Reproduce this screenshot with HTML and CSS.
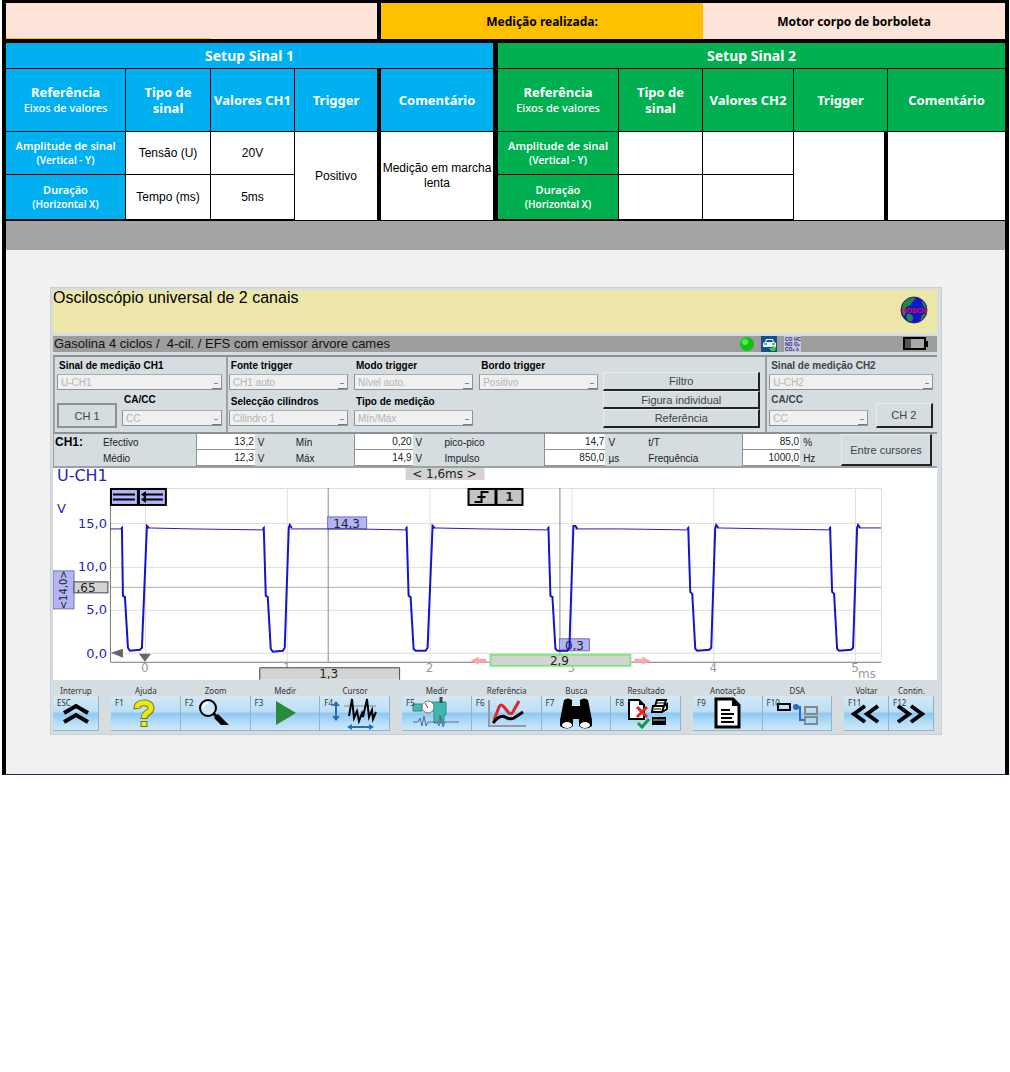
FILE: index.html
```html
<!DOCTYPE html>
<html lang="pt">
<head>
  <meta charset="utf-8">
  <title>Medição - Motor corpo de borboleta</title>
  <link rel="stylesheet" href="styles.css">
</head>
<body>
  <main class="sheet">

    <!-- Setup table -->
    <table class="setup">
      <colgroup>
        <col class="c-ref1"><col class="c-type1"><col class="c-val1"><col class="c-trig1"><col class="c-com1">
        <col class="c-ref2"><col class="c-type2"><col class="c-val2"><col class="c-trig2"><col class="c-com2">
      </colgroup>
      <tbody>
        <tr class="row-title">
          <td class="peach lined thick-right" colspan="4"></td>
          <th class="orange" colspan="3">Medição realizada:</th>
          <th class="peach" colspan="3">Motor corpo de borboleta</th>
        </tr>
        <tr class="row-setup">
          <th class="blue heavy-right" colspan="5">Setup Sinal 1</th>
          <th class="green last" colspan="5">Setup Sinal 2</th>
        </tr>
        <tr class="row-head">
          <th class="blue">Referência<small>Eixos de valores</small></th>
          <th class="blue">Tipo de<br>sinal</th>
          <th class="blue">Valores CH1</th>
          <th class="blue thick-right">Trigger</th>
          <th class="blue heavy-right">Comentário</th>
          <th class="green">Referência<small>Eixos de valores</small></th>
          <th class="green">Tipo de<br>sinal</th>
          <th class="green">Valores CH2</th>
          <th class="green">Trigger</th>
          <th class="green last">Comentário</th>
        </tr>
        <tr class="row-amp">
          <th class="blue">Amplitude de sinal<small>(Vertical - Y)</small></th>
          <td>Tensão (U)</td>
          <td>20V</td>
          <td class="thick-right" rowspan="2">Positivo</td>
          <td class="heavy-right" rowspan="2">Medição em marcha lenta</td>
          <th class="green">Amplitude de sinal<small>(Vertical - Y)</small></th>
          <td></td>
          <td></td>
          <td class="thick-right" rowspan="2"></td>
          <td class="last" rowspan="2"></td>
        </tr>
        <tr class="row-dur">
          <th class="blue">Duração<small>(Horizontal X)</small></th>
          <td>Tempo (ms)</td>
          <td>5ms</td>
          <th class="green">Duração<small>(Horizontal X)</small></th>
          <td></td>
          <td></td>
        </tr>
      </tbody>
    </table>

    <div class="divider"></div>

    <div class="stage">
      <section class="scope">

        <header class="scope-title">
          <h1>Osciloscópio universal de 2 canais</h1>
          <svg class="globe" viewBox="0 0 28 28">
            <circle cx="14" cy="14" r="13" fill="#1414c8"/>
            <path d="M2 10C4 4 9 1 14 1C17 3 12 5 11 8C9 11 6 10 5 13C7 17 5 19 4 20C1 17 1 13 2 10Z" fill="#1d8a4a"/>
            <path d="M7 18C10 17 14 20 13 23C12 26 10 26 8 25C6 23 6 20 7 18ZM22 4C25 6 27 10 27 13C24 12 22 8 22 4ZM22 19L26 17C25 21 23 23 20 25Z" fill="#1d8a4a"/>
            <circle cx="14" cy="14" r="13" fill="none" stroke="#2a2a66"/>
            <text x="14" y="17" text-anchor="middle">BOSCH</text>
          </svg>
        </header>

        <div class="vehicle">
          <span>Gasolina 4 ciclos /&nbsp; 4-cil. / EFS com emissor árvore cames</span>
          <svg class="status" viewBox="0 0 188 16">
            <circle cx="7" cy="8" r="7" fill="#12c412"/>
            <circle cx="5" cy="6" r="3" fill="#4ff04f"/>
            <rect x="21" y="0" width="16" height="16" fill="#12508c"/>
            <path d="M23 11V7L25 6L26 3H33L34 6L36 7V11Z" fill="#e8f2fa"/>
            <path d="M26 6L27 4H32L33 6Z" fill="#12508c"/>
            <path d="M24 8H27M32 8H35M24 13H35" stroke="#12508c"/>
            <path d="M36 11L32 10V12H29L31 15H35Z" fill="#42d02a"/>
            <rect x="44" y="0" width="17" height="16" fill="#c6c6d2"/>
            <text x="45" y="5">CO HC</text>
            <text x="45" y="10">NO O₂</text>
            <text x="45" y="15">CO₂ λ</text>
            <rect x="164" y="2" width="21" height="11" fill="#a8a8a8" stroke="#000" stroke-width="2"/>
            <rect x="186" y="5" width="2" height="6"/>
            <path d="M166 3V12M168 3V12M170 3V12" stroke="#000"/>
          </svg>
        </div>

        <form class="controls">
          <div class="group ch1">
            <label for="sig1" class="wide">Sinal de medição CH1</label>
            <select id="sig1" class="wide" disabled><option>U-CH1</option></select>
            <button type="button" class="ch pressed">CH 1</button>
            <label for="cc1">CA/CC</label>
            <select id="cc1" disabled><option>CC</option></select>
          </div>
          <div class="group trigger">
            <div class="field">
              <label for="src">Fonte trigger</label>
              <select id="src" disabled><option>CH1 auto</option></select>
            </div>
            <div class="field">
              <label for="mode">Modo trigger</label>
              <select id="mode" disabled><option>Nível auto.</option></select>
            </div>
            <div class="field">
              <label for="edge">Bordo trigger</label>
              <select id="edge" disabled><option>Positivo</option></select>
            </div>
            <div class="field">
              <label for="cyl">Selecção cilindros</label>
              <select id="cyl" disabled><option>Cilindro 1</option></select>
            </div>
            <div class="field">
              <label for="kind">Tipo de medição</label>
              <select id="kind" disabled><option>Mín/Máx</option></select>
            </div>
          </div>
          <div class="stack">
            <button type="button">Filtro</button>
            <button type="button">Figura individual</button>
            <button type="button">Referência</button>
          </div>
          <div class="group ch2">
            <label for="sig2" class="wide">Sinal de medição CH2</label>
            <select id="sig2" class="wide" disabled><option>U-CH2</option></select>
            <label for="cc2">CA/CC</label>
            <select id="cc2" disabled><option>CC</option></select>
            <button type="button" class="ch">CH 2</button>
          </div>
        </form>

        <form class="readout">
          <strong>CH1:</strong>
          <label for="ef">Efectivo</label><input id="ef" value="13,2" readonly><span>V</span>
          <label for="min">Mín</label><input id="min" value="0,20" readonly><span>V</span>
          <label for="pp">pico-pico</label><input id="pp" value="14,7" readonly><span>V</span>
          <label for="tt">t/T</label><input id="tt" value="85,0" readonly><span>%</span>
          <button type="button">Entre cursores</button>
          <label for="med" class="second">Médio</label><input id="med" value="12,3" readonly><span>V</span>
          <label for="max">Máx</label><input id="max" value="14,9" readonly><span>V</span>
          <label for="imp">Impulso</label><input id="imp" value="850,0" readonly><span>µs</span>
          <label for="freq">Frequência</label><input id="freq" value="1000,0" readonly><span>Hz</span>
        </form>

        <svg class="chart" viewBox="0 0 885 212">
          <!-- grid -->
          <path class="grid" d="M57 20.5H829M57 55.5H829M57 99.5H829M57 142.5H829M57 185.5H829M92.5 20V194M234.5 20V194M377.5 20V194M519.5 20V194M661.5 20V194M803.5 20V194M829.5 20V194"/>
          <path class="level" d="M57 119.5H829"/>
          <path class="axis" d="M57.5 20V194.5H829"/>
          <path class="cursor" d="M275.5 20V194M507.5 20V194"/>

          <!-- cursor values -->
          <rect class="tag" x="275" y="49" width="39" height="12"/>
          <text class="tag-text" x="294" y="60">14,3</text>
          <rect class="tag" x="507" y="171" width="30" height="12"/>
          <text class="tag-text" x="522" y="182">0,3</text>

          <!-- signal -->
          <path class="flat" d="M57 61H69M95 60L140 61L211 62M238 61L300 61L354 62M381 60L430 61L496 62M523 61L570 61L636 62M665 60L720 61L778 62M807 60H829"/>
          <path class="trace" d="M68 61L69 60L70 128L72 129L75 180L77 183L87 182L89 180L94 58L96 60"/>
          <path class="trace" d="M210 61L211 60L213 128L215 129L218 181L220 184L230 183L232 180L236 60L237 57L239 60"/>
          <path class="trace" d="M353 61L354 60L356 128L358 129L361 181L363 183L373 183L375 180L380 58L382 60"/>
          <path class="trace" d="M495 61L496 60L498 128L500 129L503 181L505 183L515 183L517 180L521 58L523 58L525 61"/>
          <path class="trace" d="M635 61L636 60L638 124L640 126L643 181L645 183L657 182L659 180L663 60L664 57L666 60"/>
          <path class="trace" d="M777 61L778 60L780 124L782 126L785 181L787 183L799 182L801 180L805 60L806 57L808 60"/>

          <!-- channel and axis names -->
          <text class="name" x="4" y="13">U-CH1</text>
          <text class="volt" x="4" y="45">V</text>
          <text class="volt end" x="54" y="60">15,0</text>
          <text class="volt end" x="54" y="103">10,0</text>
          <text class="volt end" x="54" y="146">5,0</text>
          <text class="volt end" x="54" y="190">0,0</text>
          <text class="time" x="92" y="204">0</text>
          <text class="time" x="234" y="204">1</text>
          <text class="time" x="377" y="204">2</text>
          <text class="time" x="519" y="204">3</text>
          <text class="time" x="661" y="204">4</text>
          <text class="time" x="803" y="204">5</text>
          <text class="time" x="815" y="210">ms</text>

          <!-- line mode buttons -->
          <rect class="mode" x="58" y="21" width="27" height="16"/>
          <rect class="mode" x="86" y="21" width="27" height="16"/>
          <path d="M60 26.5H82M60 31.5H82M92 26.5H110M92 31.5H110" stroke="#000" stroke-width="2"/>
          <path d="M88 26.5L93 23V30ZM88 31.5L93 28V35Z"/>

          <!-- trigger edge -->
          <rect class="edge" x="416" y="21" width="27" height="16"/>
          <rect class="edge" x="444" y="21" width="26" height="16"/>
          <path d="M422 34H429V24H436M425 29H433" fill="none" stroke="#000" stroke-width="2"/>
          <text class="value bold" x="457" y="33">1</text>

          <rect class="grey-box plain" x="353" y="0" width="79" height="12"/>
          <text class="value" x="392" y="10">&lt; 1,6ms &gt;</text>

          <!-- vertical scale -->
          <rect class="tag" x="0" y="103" width="21" height="38"/>
          <text class="value small" transform="translate(14 122) rotate(-90)">&lt;14,0&gt;</text>
          <rect class="grey-box" x="21" y="114" width="34" height="11"/>
          <text class="value" x="33" y="124">,65</text>
          <path class="mark" d="M58 185L70 181V190ZM86 186H98L92 194Z"/>

          <!-- time cursors -->
          <rect class="window" x="438" y="187" width="140" height="11"/>
          <text class="value" x="507" y="197">2,9</text>
          <path class="pull" d="M418 193L426 189V191H434V195H426V197ZM598 193L590 189V191H582V195H590V197Z"/>
          <path class="grey-box" d="M207 212V200H347V212"/>
          <text class="value" x="276" y="210">1,3</text>
        </svg>

        <nav class="keys">
          <div class="bank">
            <button type="button"><span>Interrup</span>
              <span class="face"><i>ESC</i>
                <svg viewBox="0 0 50 34"><path d="M13 17L25 10L37 17M13 26L25 19L37 26" fill="none" stroke="#000" stroke-width="4"/></svg>
              </span></button>
          </div>
          <div class="bank">
            <button type="button"><span>Ajuda</span>
              <span class="face"><i>F1</i>
                <svg viewBox="0 0 50 34"><path d="M17 13C16 5 31 5 31 12C31 17 24 16 24 23M24 25V31" fill="none" stroke="#77771a" stroke-width="7"/><path d="M17 12C17 5 31 5 31 12C31 17 24 16 24 22M24 26V30" fill="none" stroke="#e8ea10" stroke-width="5"/></svg>
              </span></button>
            <button type="button"><span>Zoom</span>
              <span class="face"><i>F2</i>
                <svg viewBox="0 0 50 34"><circle cx="18" cy="12" r="8" fill="#cfe6f6" stroke="#000" stroke-width="2"/><path d="M13 12C13 9 15 7 18 7" fill="none" stroke="#fff" stroke-width="2"/><path d="M23 17L27 21" stroke="#000" stroke-width="3"/><path d="M24 22L28 18L39 29H31Z"/></svg>
              </span></button>
            <button type="button"><span>Medir</span>
              <span class="face"><i>F3</i>
                <svg viewBox="0 0 50 34"><path d="M16 5L36 17L16 29Z" fill="#2b8a3a"/></svg>
              </span></button>
            <button type="button"><span>Cursor</span>
              <span class="face"><i>F4</i>
                <svg viewBox="0 0 50 34"><path d="M14 10H46" stroke="#888"/><path d="M6 9V21M21 31H40" stroke="#2a6cb8" stroke-width="2"/><path d="M6 5L2 10H10ZM6 25L2 20H10ZM17 31L22 28V34ZM44 31L39 28V34Z" fill="#2a6cb8"/><path d="M19 20L22 3L24 22L27 15L29 25L32 17L33 21L37 3L39 21L42 14L43 23L46 16" fill="none" stroke="#000" stroke-width="2"/></svg>
              </span></button>
          </div>
          <div class="bank">
            <button type="button"><span>Medir</span>
              <span class="face"><i>F5</i>
                <svg viewBox="0 0 50 34"><path d="M2 8H11V15H2ZM20 6H35V19H33V27H29V19L27 27H23V16L20 13Z" fill="#3fb8b0" stroke="#2c8c88"/><path d="M30 1V7" stroke="#444" stroke-width="3"/><circle cx="17" cy="11" r="6" fill="#fff" stroke="#777"/><path d="M17 12L14 7" stroke="#c22"/><path d="M2 26H7L9 22L11 30L13 20L15 30L17 26H26L28 30L30 20L32 31L34 26H48" fill="none" stroke="#5a6a9a"/></svg>
              </span></button>
            <button type="button"><span>Referência</span>
              <span class="face"><i>F6</i>
                <svg viewBox="0 0 50 34"><path d="M8 4V30H45" fill="none" stroke="#999" stroke-width="2"/><path d="M13 24L18 11Q20 7 23 11L28 17Q31 19 33 14L38 5" fill="none" stroke="#e02626" stroke-width="3"/><path d="M12 27Q19 18 24 21T33 22L42 16" fill="none" stroke="#000" stroke-width="3"/></svg>
              </span></button>
            <button type="button"><span>Busca</span>
              <span class="face"><i>F7</i>
                <svg viewBox="0 0 50 34"><path d="M13 4Q17 1 21 4V10H29V4Q33 1 37 4L41 24V30Q34 35 28 30V23H22V30Q16 35 9 30V24Z"/><ellipse cx="16" cy="29" rx="5" ry="3" fill="#fff"/><ellipse cx="34" cy="29" rx="5" ry="3" fill="#fff"/></svg>
              </span></button>
            <button type="button"><span>Resultado</span>
              <span class="face"><i>F8</i>
                <svg viewBox="0 0 50 34"><path d="M8 4H18L23 9V23H8Z" fill="#fff" stroke="#000" stroke-width="2"/><path d="M18 4V9H23Z"/><path d="M16 11L26 21M26 11L16 21" stroke="#e02626" stroke-width="3"/><path d="M17 27L21 31L28 23" fill="none" stroke="#1f9440" stroke-width="3"/><path d="M34 10L36 4H45L43 10M32 10H43L41 16H31ZM43 10L46 8V13L41 16" fill="#fff" stroke="#000" stroke-width="2"/><path d="M36 7H43M33 13H40" stroke="#000"/><rect x="31" y="21" width="14" height="8"/><path d="M32 24H44" stroke="#ccc"/></svg>
              </span></button>
          </div>
          <div class="bank">
            <button type="button"><span>Anotação</span>
              <span class="face"><i>F9</i>
                <svg viewBox="0 0 50 34"><path d="M14 3H31L37 9V31H14Z" fill="#fff" stroke="#000" stroke-width="3"/><path d="M30 3V10H37Z"/><path d="M19 14H28M19 18H32M19 22H30M19 26H32" stroke="#000" stroke-width="2"/></svg>
              </span></button>
            <button type="button"><span>DSA</span>
              <span class="face"><i>F10</i>
                <svg viewBox="0 0 50 34"><rect x="6" y="8" width="12" height="6" fill="none" stroke="#000" stroke-width="2"/><circle cx="24" cy="11" r="3" fill="#2a6cc8"/><path d="M24 11H28V24H32" fill="none" stroke="#2a6cc8" stroke-width="2"/><path d="M33 11H45V18H33ZM33 21H45V28H33Z" fill="none" stroke="#888" stroke-width="2"/></svg>
              </span></button>
          </div>
          <div class="bank">
            <button type="button"><span>Voltar</span>
              <span class="face"><i>F11</i>
                <svg viewBox="0 0 50 34"><path d="M24 10L13 18L24 26M37 10L26 18L37 26" fill="none" stroke="#000" stroke-width="4"/></svg>
              </span></button>
            <button type="button"><span>Contin.</span>
              <span class="face"><i>F12</i>
                <svg viewBox="0 0 50 34"><path d="M12 10L23 18L12 26M25 10L36 18L25 26" fill="none" stroke="#000" stroke-width="4"/></svg>
              </span></button>
          </div>
        </nav>

      </section>
    </div>
  </main>
</body>
</html>
```
FILE: styles.css
```css
* {
  box-sizing: border-box;
}

body {
  margin: 0;
  background-color: #fff;
  font-family: "Liberation Sans", Arial, sans-serif;
}

/* Black frame round the whole sheet */
.sheet {
  margin: 0 1px 0 2px;
  border: 4px solid #000;
  border-top-width: 3px;
  border-bottom: 1px solid #1c2c50;
}

/* Setup table */
.setup {
  width: 100%;
  table-layout: fixed;
  border-collapse: separate;
  border-spacing: 0;
  font-size: 12px;
  line-height: 15px;
  text-align: center;
}

.c-ref1 { width: 120px; }
.c-type1 { width: 85px; }
.c-val1 { width: 84px; }
.c-trig1 { width: 86px; }
.c-com1 { width: 117px; }
.c-ref2 { width: 121px; }
.c-type2 { width: 84px; }
.c-val2 { width: 91px; }
.c-trig2 { width: 94px; }
.c-com2 { width: 117px; }

.setup th,
.setup td {
  padding: 0;
  border: 0 solid #000;
  border-right-width: 1px;
  border-bottom-width: 1px;
}

.setup th {
  font-family: "Noto Sans", sans-serif;
}

.setup small {
  display: block;
  font-size: 11px;
  font-weight: 500;
}

.setup .thick-right { border-right-width: 4px; }
.setup .heavy-right { border-right-width: 5px; }
.setup .last { border-right-width: 0; }

.row-title { height: 40px; }
.row-setup { height: 26px; }
.row-head { height: 63px; }
.row-amp { height: 43px; }
.row-dur { height: 46px; }

.setup .row-title th,
.setup .row-title td {
  border-right-width: 0;
  border-bottom-width: 4px;
}

.setup .row-title .thick-right { border-right-width: 4px; }

.setup .row-setup th {
  font-size: 14px;
}

.row-head th {
  font-size: 13px;
  line-height: 16px;
}

.setup .row-dur th,
.setup .row-dur td {
  border-bottom-width: 2px;
}

.setup .row-amp th,
.setup .row-dur th {
  font-size: 11px;
  font-weight: 600;
}

.setup .row-amp small,
.setup .row-dur small {
  font-size: 10px;
  font-weight: 600;
}

.peach { background-color: #fde4d8; }
.orange { background-color: #ffc000; }

.lined {
  background-image: linear-gradient(#ffc000, #ffc000);
  background-repeat: no-repeat;
  background-position: left bottom;
  background-size: 55% 1px;
}

.blue {
  background-color: #00b0f0;
  color: #fff;
}

.green {
  background-color: #00b050;
  color: #fff;
}

.divider {
  height: 29px;
  background-color: #a5a5a5;
}

.stage {
  padding: 37px 63px 39px 44px;
  background-color: #f1f1f1;
}

/* Oscilloscope window */
.scope {
  padding: 2px 4px 3px 2px;
  border: 1px solid #c9d0d3;
  background-color: #d5dde1;
}

.scope-title {
  display: flex;
  justify-content: space-between;
  height: 43px;
  padding: 0 9px 0 0;
  background-color: #ece7a9;
}

.scope-title h1 {
  margin: 0;
  font-size: 16px;
  font-weight: normal;
  line-height: 16px;
}

.globe {
  width: 28px;
  height: 28px;
  margin-top: 6px;
}

.globe text {
  fill: #e01030;
  font-size: 7px;
  font-weight: bold;
}

.vehicle {
  display: flex;
  justify-content: space-between;
  align-items: center;
  height: 16px;
  margin: 3px 0;
  padding: 0 9px 0 1px;
  background-color: #9d9d9d;
  color: #111;
  font-size: 13px;
  line-height: 16px;
}

.status {
  width: 188px;
  height: 16px;
}

.status text {
  fill: #2a2a9c;
  font-size: 5px;
  font-weight: bold;
}

button {
  padding: 0;
  border: 1px solid #e6ecee;
  border-right: 2px solid #222;
  border-bottom: 2px solid #222;
  background-color: #d5dde1;
  color: #3c4448;
  font-family: inherit;
  font-size: 11px;
}

/* Signal and trigger settings */
.controls {
  display: grid;
  grid-template-columns: 173fr 378fr 157fr 177fr;
  height: 77px;
  border-top: 2px solid #8c9396;
}

.group {
  border-left: 2px solid #9aa2a5;
  font-size: 10px;
  font-weight: bold;
}

.group label {
  align-self: center;
  line-height: 14px;
  padding-left: 2px;
  white-space: nowrap;
}

.wide {
  grid-column: 1 / -1;
}

.ch1,
.ch2 {
  display: grid;
  grid-template-rows: 16px 16px 20px 16px;
  padding: 1px 4px 0 2px;
}

.ch1 {
  grid-template-columns: 60px 1fr;
  column-gap: 5px;
}

.ch2 {
  grid-template-columns: 100fr 58fr;
  column-gap: 8px;
  margin-left: 5px;
  color: #3c4448;
}

.ch {
  grid-row: 3 / 5;
  height: 25px;
  margin-top: 13px;
}

.ch1 .ch {
  grid-column: 1;
}

.ch2 .ch {
  grid-column: 2;
}

.pressed {
  border: 2px solid #8c9396;
}

select {
  appearance: none;
  width: 100%;
  height: 16px;
  padding: 0 3px;
  border: 1px solid #8c9396;
  border-top-color: #a8aeb0;
  border-radius: 0;
  background-color: #f0f0f0;
  background-image:
    linear-gradient(#888, #888),
    linear-gradient(#777, #777);
  background-repeat: no-repeat;
  background-position: right 3px top 8px, right 0 bottom 0;
  background-size: 4px 1px, 9px 1px;
  font-family: inherit;
  font-size: 10px;
}

select:disabled {
  color: #b4b4b4;
  opacity: 1;
}

.trigger {
  display: grid;
  grid-template-columns: 1fr 1fr 1fr;
  grid-auto-rows: 36px;
  column-gap: 6px;
  padding: 1px 5px 0 1px;
}

.field {
  display: flex;
  flex-direction: column;
}

.trigger label {
  align-self: flex-start;
  line-height: 16px;
}

.stack {
  display: flex;
  flex-direction: column;
  padding: 15px 0 4px;
}

.stack button {
  flex: 1;
}

/* Measured values */
.readout {
  display: grid;
  grid-template-columns: 49fr 93fr 59fr 41fr 58fr 59fr 32fr 100fr 61fr 43fr 94fr 58fr 41fr 91fr 5fr;
  grid-template-rows: 16px 16px;
  align-items: center;
  border-top: 2px solid #8c9396;
  border-bottom: 2px solid #9aa2a5;
  border-left: 1px solid #9aa2a5;
  color: #222;
  font-size: 10px;
}

.readout strong {
  color: #000;
  font-size: 12px;
  padding-left: 1px;
}

.readout .second {
  grid-column: 2;
}

.readout input {
  width: 100%;
  height: 16px;
  padding: 0 1px;
  border: 0 solid #8c9396;
  border-left-width: 1px;
  border-bottom-width: 1px;
  border-radius: 0;
  background-color: #fff;
  color: #222;
  font-family: inherit;
  font-size: 10px;
  text-align: right;
}

.readout span {
  padding-left: 3px;
}

.readout button {
  grid-column: 14;
  grid-row: 1 / 3;
  align-self: stretch;
}

/* Chart */
.chart {
  display: block;
  width: 100%;
  height: auto;
  background-color: #fff;
  font-family: "DejaVu Sans", sans-serif;
  font-size: 12px;
}

.grid {
  stroke: #dedede;
}

.level {
  stroke: #b0b0b0;
}

.axis {
  fill: none;
  stroke: #777;
}

.cursor {
  stroke: #888;
}

.flat {
  fill: none;
  stroke: #2020b8;
}

.trace {
  fill: none;
  stroke: #1414cc;
  stroke-width: 2;
}

.name,
.volt {
  fill: #2626b4;
}

.volt {
  font-size: 13px;
}

.name {
  font-size: 16px;
}

.end {
  text-anchor: end;
}

.time {
  fill: #999;
  text-anchor: middle;
}

.tag {
  fill: #b4b4f8;
  stroke: #7070b0;
}

.value,
.tag-text {
  fill: #222;
  text-anchor: middle;
}

.small {
  font-size: 10px;
}

.bold {
  font-weight: bold;
}

.mode {
  fill: #b4b4f8;
  stroke: #000;
  stroke-width: 2;
}

.edge {
  fill: #c4c4c4;
  stroke: #000;
  stroke-width: 2;
}

.grey-box {
  fill: #d3d3d3;
  stroke: #444;
}

.plain {
  stroke: none;
}

.window {
  fill: #d3d3d3;
  stroke: #7fe87f;
  stroke-width: 2;
}

.mark {
  fill: #666;
}

.pull {
  fill: #f8a8a8;
}

/* Function keys */
.keys {
  display: grid;
  grid-template-columns: 46fr 279fr 279fr 139fr 90fr;
  column-gap: 12px;
  height: 51px;
  padding: 5px 3px 0 0;
}

.bank {
  display: flex;
  min-width: 0;
}

.keys button {
  flex: 1;
  min-width: 0;
  display: flex;
  flex-direction: column;
  border: 0;
  background: none;
  color: #333;
  font-family: "Noto Sans", sans-serif;
  font-size: 8px;
  line-height: 11px;
  text-align: center;
}

.keys button > span {
  width: 100%;
}

.face {
  position: relative;
  display: flex;
  justify-content: center;
  height: 35px;
  border-right: 1px solid #8fb4cc;
  border-bottom: 1px solid #8fb4cc;
  background-image: linear-gradient(#d4e8f5, #bcdff7 45%, #8ec8f0 52%, #b0dbf8 75%, #d0e8f8);
}

.face i {
  position: absolute;
  top: 1px;
  left: 4px;
  font-style: normal;
}

.face svg {
  width: 50px;
  height: 34px;
  flex: none;
}
```
